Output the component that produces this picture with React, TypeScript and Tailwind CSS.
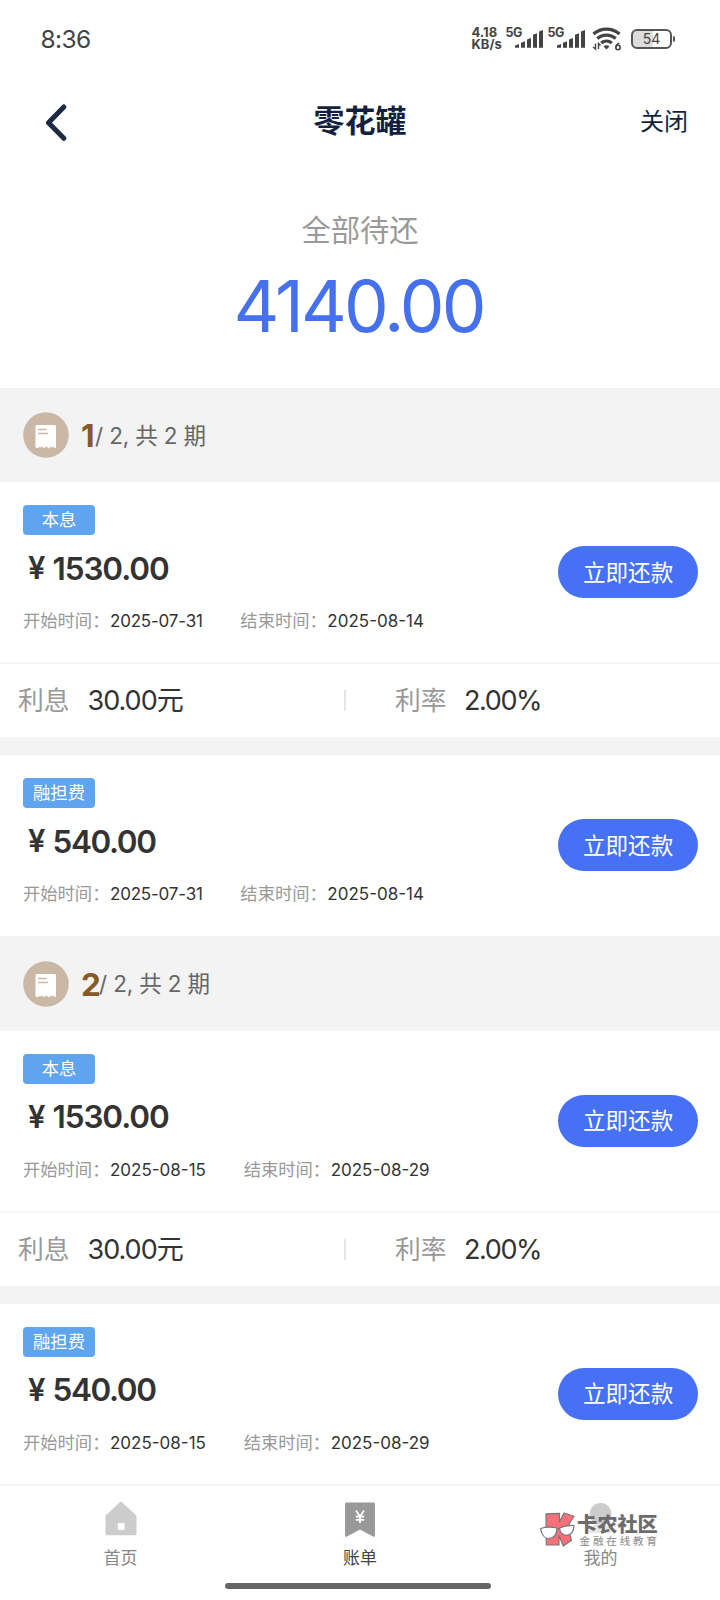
import type { ReactNode } from 'react';

type Fee = { tag: string; amount: string; start: string; end: string };
type Period = { index: number; fees: [Fee, Fee]; interest: string; rate: string };

const periods: Period[] = [
  {
    index: 1,
    interest: '30.00元',
    rate: '2.00%',
    fees: [
      { tag: '本息', amount: '1530.00', start: '2025-07-31', end: '2025-08-14' },
      { tag: '融担费', amount: '540.00', start: '2025-07-31', end: '2025-08-14' },
    ],
  },
  {
    index: 2,
    interest: '30.00元',
    rate: '2.00%',
    fees: [
      { tag: '本息', amount: '1530.00', start: '2025-08-15', end: '2025-08-29' },
      { tag: '融担费', amount: '540.00', start: '2025-08-15', end: '2025-08-29' },
    ],
  },
];

function Signal() {
  return (
    <svg width="28" height="20" viewBox="0 0 28 20" fill="#444">
      <path d="M0 16.500 4 15v3.800H0zM6 13.800l4-1.500v6.500H6zM12 10.500l4-1.500v9.800H12zM18 5.800 22 4.300v14.500H18zM24 2.500 28 1v17.800H24z" />
    </svg>
  );
}

function StatusBar() {
  return (
    <div className="flex h-[78px] shrink-0 items-center pl-[40.500px] pr-[45px] text-[#444]">
      <span className="flex-1 text-[24.500px] tracking-[-0.600px]">8:36</span>
      <div className="flex h-[26px] items-start">
        <div className="w-[34px] whitespace-pre-line text-[13px] font-bold leading-[12.300px]">{'4.18\nKB/s'}</div>
        <span className="w-[9.500px] whitespace-nowrap text-[12.500px] font-bold leading-[13px] tracking-[-0.400px]">5G</span>
        <span className="mt-[3px] w-[32.500px]"><Signal /></span>
        <span className="w-[9.500px] whitespace-nowrap text-[12.500px] font-bold leading-[13px] tracking-[-0.400px]">5G</span>
        <span className="mt-[3px] w-[35px]"><Signal /></span>
        <svg className="mt-[1px]" width="30" height="24" viewBox="0 0 30 24" fill="none" stroke="#444">
          <path d="M1.500 7a19.500 19.500 0 0 1 26 0M5.300 11.700a13.500 13.500 0 0 1 18.400 0M9.200 16a8 8 0 0 1 10.600 0" strokeWidth="3.200" />
          <path d="m11.500 19.500 3 3 3-3a4.600 4.600 0 0 0-6 0z" fill="#444" stroke="none" />
          <path d="M3.500 16.500v5.500l-2.500-2M6.500 22v-5.500l2 2" strokeWidth="1.400" />
          <circle cx="26" cy="20.500" r="2.200" strokeWidth="1.600" />
          <path d="M27.300 16.200q-2.700.6-3.500 3.800" strokeWidth="1.600" />
        </svg>
        <div className="ml-[9px] mt-[2.500px] flex items-center">
          <div className="flex h-[20px] w-[41px] items-center justify-center rounded-[6px] border-2 border-[#555] bg-[linear-gradient(90deg,#ddd_54%,#fff_54%)] text-[14px] leading-[18px] text-[#444]">
            54
          </div>
          <div className="ml-px h-[6px] w-[2px] rounded-r bg-[#555]" />
        </div>
      </div>
    </div>
  );
}

function BillIcon() {
  return (
    <svg width="46" height="46" viewBox="0 0 46 46">
      <circle cx="23" cy="23" r="22.800" fill="#cab8a6" />
      <path d="M12.500 14.500q0-1.500 1.500-1.500h17.500q1.500 0 1.500 1.500V36q-1.700 0-2.300-1.500-1.200 1.800-2.600 0h-.4q-1.200 2.600-2.600 1.500-.9-1.500-1.700-1.500-.9 0-1.500 1.200-1.400 1.200-2.400-1.200h-.6q-1 1.600-2.300.2-.9 1.300-2.300 1.300-1.800 0-1.800-1z" fill="#fff" />
      <path d="M15 17.500h8.500M15 21.500h10" stroke="#cab8a6" strokeWidth="1.600" />
    </svg>
  );
}

function PeriodHeader({ index }: { index: number }) {
  return (
    <div className="flex h-[94.600px] items-center bg-[#f3f3f3] pl-[23px]">
      <BillIcon />
      <div className="ml-[12px] flex items-center text-[22.500px] leading-[40px] tracking-[-0.150px] text-[#666]">
        <span className={index === 1 ? 'w-[14px] pt-[2px] text-[31.500px] font-bold tracking-[-2px] text-[#865a26]' : 'w-[18px] pt-[2px] text-[31.500px] font-bold text-[#865a26]'}>
          {index}
        </span>
        <span className="whitespace-pre pt-px">/ 2, 共 2 期</span>
      </div>
    </div>
  );
}

function DateField({ label, children }: { label: string; children: ReactNode }) {
  return (
    <div className="flex">
      <span className="w-[87px] whitespace-nowrap text-[17.300px] text-[#999]">{label}</span>
      <span className={children === '2025-07-31' ? 'text-[17px] tracking-[-0.200px] text-[#333]' : 'text-[17px] text-[#333]'}>{children}</span>
    </div>
  );
}

function FeeCard({ fee, tall }: { fee: Fee; tall?: boolean }) {
  return (
    <div className={tall ? 'flex h-[181px] justify-between bg-white pl-[23px] pr-[21.700px]' : 'flex h-[180px] justify-between bg-white pl-[23px] pr-[21.700px]'}>
      <div className="flex flex-col pt-[23px]">
        <div className="flex h-[30px] w-[72px] items-center justify-center rounded-[4px] bg-[#5fa4ef] text-[17.300px] leading-[30px] text-white">
          {fee.tag}
        </div>
        <div className="mt-[13px] flex h-[40px] items-center pl-[5px] font-semibold text-[#333]">
          <span className="w-[24.500px] text-[31px]">¥</span>
          <span className={tall ? 'text-[31.500px] tracking-[-1.400px]' : 'text-[31.500px] tracking-[-1.100px]'}>{fee.amount}</span>
        </div>
        <div className="mt-[20px] flex h-[26px] items-center gap-[37.700px] leading-[26px]">
          <DateField label="开始时间：">{fee.start}</DateField>
          <DateField label="结束时间：">{fee.end}</DateField>
        </div>
      </div>
      <button className="mt-[63.600px] flex h-[52.500px] w-[140.500px] items-center justify-center rounded-full bg-[#4671f4] pt-px text-[22.600px] text-white">
        立即还款
      </button>
    </div>
  );
}

function RateRow({ interest, rate }: { interest: string; rate: string }) {
  return (
    <div className="flex h-[75px] items-center border-t-2 border-[#f5f5f5] bg-white text-[27px] text-[#333]">
      <div className="flex w-[344px] items-center pl-[18px] pt-px">
        <span className="w-[69.500px] text-[25.800px] text-[#999]">利息</span>
        <span className="tracking-[-1px]">{interest}</span>
      </div>
      <div className="h-[21px] w-[1.500px] bg-[#e5e5e5]" />
      <div className="flex items-center pl-[49.500px] pt-px">
        <span className="w-[69px] text-[25.800px] text-[#999]">利率</span>
        <span className="tracking-[-1.400px]">{rate}</span>
      </div>
    </div>
  );
}

function Watermark() {
  return (
    <div className="absolute left-[540px] top-[27px] flex">
      <svg className="overflow-visible" width="36" height="38" viewBox="0 0 36 38">
        <g stroke="#777" strokeWidth="1.200" strokeLinejoin="round">
          <path d="M6 .8 19.500.3v8.700L24 0l10 3.200-6.500 10.500 4 13.500-8.200 5.800-4.300-10.500V32H6.300z" fill="#f9707a" />
          <path d="M.5 15.500q8-2.500 16.500-.5-.3 10.500-8.500 10.500-6 0-8-10zM19.500 15q6-3 14.500-2.500-.3 9.500-7.500 9.800-6 0-7-7.300zM17 15.500h2.500" fill="#fff" />
        </g>
      </svg>
      <div className="ml-[1px] mt-[1px] flex flex-col whitespace-nowrap">
        <span className="text-[20.200px] font-black leading-[22px] text-[#6c6c6c]">卡农社区</span>
        <span className="pl-[2.500px] text-[10.500px] font-medium leading-[12px] tracking-[2.900px] text-[#999]">金融在线教育</span>
      </div>
    </div>
  );
}

function TabBar() {
  return (
    <nav className="relative h-[116px] shrink-0 border-t-2 border-[#f5f5f5] bg-white">
      <div className="flex text-[17px] leading-[24px] text-[#888]">
        <div className="flex w-[240px] flex-col items-center pl-px">
          <svg className="mt-[15px]" width="32" height="36" viewBox="0 0 32 36">
            <path d="M15.200 1q.8-.7 1.600 0L30.700 14q.8.8.8 1.500v17.300q0 1.500-1.500 1.500H2q-1.500 0-1.500-1.500V15.500q0-.7.8-1.500z" fill="#ccc" />
            <path d="M12.800 22h6.700v7h-6.700z" fill="#fff" />
          </svg>
          <span className="mt-[9px]">首页</span>
        </div>
        <div className="flex w-[240px] flex-col items-center">
          <svg className="mt-[15px]" width="32" height="36" viewBox="0 0 32 36">
            <path d="M2.500 1.500h27q1.500 0 1.500 1.500v31.500q0 2-2 1L16 28.500 3 35.500q-2 1-2-1V3q0-1.500 1.500-1.500z" fill="#999" />
            <path d="m12 9.500 4 6 4-6M16 15v7M11.800 15.500h8.400M11.800 18.800h8.400" fill="none" stroke="#fff" strokeWidth="1.800" />
          </svg>
          <span className="mt-[9px] text-[#444]">账单</span>
        </div>
        <div className="flex w-[240px] flex-col items-center">
          <svg className="mt-[15px]" width="32" height="36" viewBox="0 0 32 36" fill="#ccc">
            <circle cx="16.500" cy="13" r="11" />
            <path d="M5 32q0-9 11-9t11 9z" fill="#e6e6e6" />
          </svg>
          <span className="mt-[9px] pl-px">我的</span>
        </div>
      </div>
      <Watermark />
      <div className="absolute left-[225px] top-[97px] h-[6.500px] w-[266px] rounded-full bg-[#666]" />
    </nav>
  );
}

export default function App() {
  return (
    <div className="flex h-[1600px] w-[720px] flex-col overflow-hidden bg-white font-['Inter','Noto_Sans_CJK_SC',sans-serif]">
      <StatusBar />
      <header className="flex h-[87px] shrink-0 items-center pl-[44px] pr-[32px] text-[#141f3d]">
        <svg width="24" height="38" viewBox="0 0 24 38" fill="none" stroke="#1c2a45" strokeWidth="5" strokeLinecap="round" strokeLinejoin="round">
          <path d="M19.800 4 4.500 19.800l15.300 15.500" />
        </svg>
        <h1 className="flex-1 pl-[12px] text-center text-[31px] font-bold">零花罐</h1>
        <span className="text-[24px]">关闭</span>
      </header>
      <section className="flex h-[222.800px] shrink-0 flex-col items-center">
        <div className="mt-[44px] h-[44px] text-[29.300px] leading-[44px] text-[#999]">全部待还</div>
        <div className="mt-[13px] h-[80px] pr-[3px] text-[71px] leading-[80px] tracking-[-2.900px] text-[#4671ee]">4140.00</div>
      </section>
      <main className="h-[1096.200px] shrink-0 overflow-hidden">
        {periods.map((p) => (
          <section key={p.index}>
            <PeriodHeader index={p.index} />
            <FeeCard fee={p.fees[0]} />
            <RateRow interest={p.interest} rate={p.rate} />
            <div className="h-[18px] bg-[#f3f3f3]" />
            <FeeCard fee={p.fees[1]} tall />
          </section>
        ))}
      </main>
      <TabBar />
    </div>
  );
}
